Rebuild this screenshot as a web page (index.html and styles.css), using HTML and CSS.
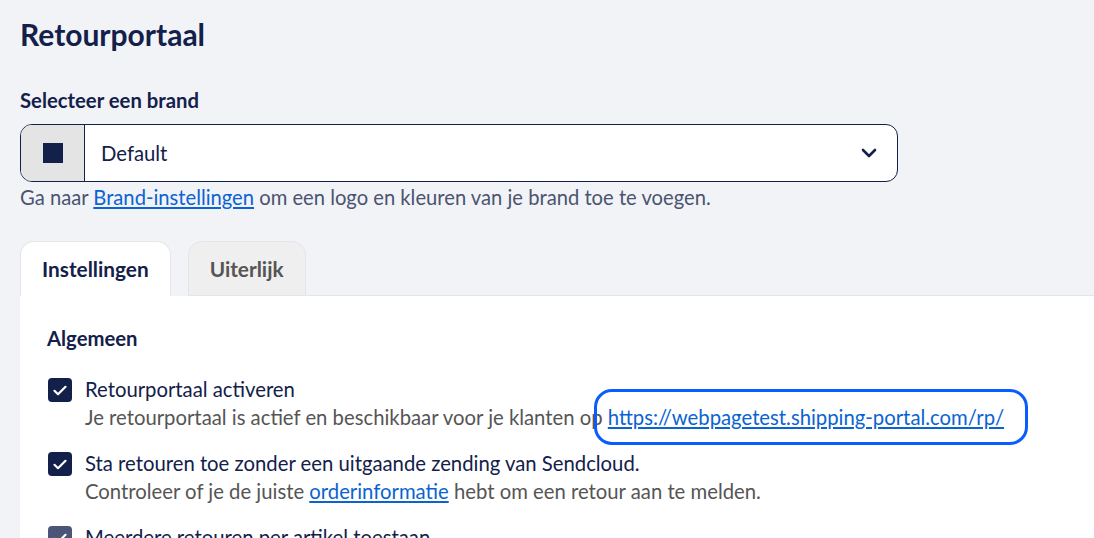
FILE: index.html
```html
<!DOCTYPE html>
<html lang="nl">
<head>
    <meta charset="UTF-8">
    <meta name="viewport" content="width=device-width, initial-scale=1.0">
    <title>Retourportaal</title>
    <link rel="stylesheet" href="styles.css">
</head>
<body>
    <div class="page">
        <h1 class="page-title">Retourportaal</h1>

        <label class="field-label">Selecteer een brand</label>
        <div class="brand-select">
            <div class="brand-swatch"><span class="swatch"></span></div>
            <div class="brand-value">Default</div>
            <svg class="chevron" width="16" height="10" viewBox="0 0 16 10">
                <path d="M2 2 L8 8 L14 2" fill="none" stroke="#12204a" stroke-width="2.6" stroke-linecap="round" stroke-linejoin="round"/>
            </svg>
        </div>
        <p class="hint">Ga naar <a href="#">Brand-instellingen</a> om een logo en kleuren van je brand toe te voegen.</p>

        <div class="tabs">
            <a class="tab active" href="#">Instellingen</a>
            <a class="tab" href="#">Uiterlijk</a>
            <div class="tab-rest"></div>
        </div>

        <div class="panel">
            <h2 class="section-title">Algemeen</h2>

            <div class="option">
                <span class="checkbox">
                    <svg width="14" height="11" viewBox="0 0 14 11"><path d="M1.5 5.8 L5 9.2 L12.5 1.8" fill="none" stroke="#fff" stroke-width="2.2" stroke-linecap="round" stroke-linejoin="round"/></svg>
                </span>
                <div class="option-text">
                    <div class="option-label">Retourportaal activeren</div>
                    <div class="option-help">Je retourportaal is actief en beschikbaar voor je klanten op <a class="focused" href="#">https://webpagetest.shipping-portal.com/rp/</a></div>
                </div>
            </div>

            <div class="option">
                <span class="checkbox">
                    <svg width="14" height="11" viewBox="0 0 14 11"><path d="M1.5 5.8 L5 9.2 L12.5 1.8" fill="none" stroke="#fff" stroke-width="2.2" stroke-linecap="round" stroke-linejoin="round"/></svg>
                </span>
                <div class="option-text">
                    <div class="option-label">Sta retouren toe zonder een uitgaande zending van Sendcloud.</div>
                    <div class="option-help">Controleer of je de juiste <a href="#">orderinformatie</a> hebt om een retour aan te melden.</div>
                </div>
            </div>

            <div class="option">
                <span class="checkbox muted">
                    <svg width="14" height="11" viewBox="0 0 14 11"><path d="M1.5 5.8 L5 9.2 L12.5 1.8" fill="none" stroke="#fff" stroke-width="2.2" stroke-linecap="round" stroke-linejoin="round"/></svg>
                </span>
                <div class="option-text">
                    <div class="option-label">Meerdere retouren per artikel toestaan</div>
                </div>
            </div>
        </div>
    </div>
</body>
</html>
```

FILE: styles.css
```css
body {
    margin: 0;
    background: #f2f3f7;
    font-family: Lato, "Open Sans", sans-serif;
    color: #12204a;
    overflow: hidden;
}
.page {
    padding: 15px 0 0 20px;
}
.page-title {
    margin: 0;
    font-size: 30px;
    font-weight: 700;
    line-height: 38px;
}
.field-label {
    display: block;
    margin-top: 35px;
    font-size: 20.3px;
    font-weight: 700;
    line-height: 24px;
}
.brand-select {
    display: flex;
    align-items: center;
    width: 876px;
    height: 56px;
    margin-top: 12px;
    border: 1px solid #12204a;
    border-radius: 12px;
    background: #fff;
    overflow: hidden;
}
.brand-swatch {
    display: flex;
    align-items: center;
    justify-content: center;
    width: 63px;
    height: 100%;
    background: #e4e4e4;
    border-right: 1px solid #12204a;
}
.swatch {
    width: 20px;
    height: 20px;
    background: #12204a;
}
.brand-value {
    flex: 1;
    padding-left: 16px;
    font-size: 20.3px;
}
.chevron {
    margin-right: 20px;
}
.hint {
    margin: 3px 0 0;
    font-size: 20.2px;
    line-height: 24px;
    color: #4a5470;
}
a {
    color: #0a63d2;
    text-decoration: underline;
}
.tabs {
    display: flex;
    align-items: flex-end;
    margin-top: 32px;
}
.tab {
    display: block;
    padding: 15px 21px;
    font-size: 20.8px;
    font-weight: 700;
    line-height: 24px;
    text-decoration: none;
    border: 1px solid #e4e5ea;
    border-bottom: none;
    border-radius: 14px 14px 0 0;
    background: #efefef;
    color: #555;
}
.tab.active {
    background: #fff;
    color: #12204a;
}
.tab + .tab {
    margin-left: 17px;
    padding-bottom: 14px;
    border-bottom: 1px solid #e4e5ea;
}
.tab-rest {
    flex: 1;
    border-bottom: 1px solid #e4e5ea;
}
.panel {
    background: #fff;
    padding: 30px 27px 0;
    height: 300px;
}
.section-title {
    margin: 0 0 26px;
    font-size: 20.3px;
    font-weight: 700;
    line-height: 24px;
}
.option {
    display: flex;
    align-items: flex-start;
    margin-bottom: 19px;
}
.checkbox {
    display: flex;
    align-items: center;
    justify-content: center;
    flex: none;
    width: 24px;
    height: 24px;
    margin: 2px 13px 0 1px;
    border-radius: 4px;
    background: #12204a;
}
.checkbox.muted {
    background: #4b5578;
}
.option-label {
    font-size: 20.3px;
    line-height: 26px;
}
.option-help {
    margin-top: 1px;
    font-size: 20.3px;
    line-height: 28px;
    color: #555;
}
/* keyboard focus ring on the portal link */
.focused {
    padding: 2px 10px 2px 0;
    outline: 3px solid #0a5cff;
    outline-offset: 11px;
    border-radius: 4px;
}
```
